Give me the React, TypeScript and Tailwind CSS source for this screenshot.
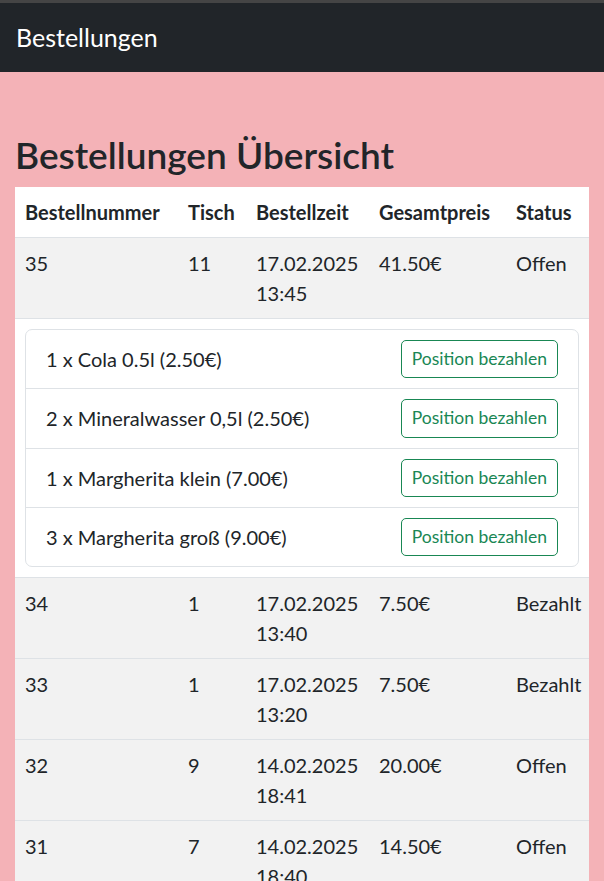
import React from "react";

const orders = [
  { id: "35", tisch: "11", date: "17.02.2025", time: "13:45", price: "41.50€", status: "Offen", expanded: true },
  { id: "34", tisch: "1", date: "17.02.2025", time: "13:40", price: "7.50€", status: "Bezahlt" },
  { id: "33", tisch: "1", date: "17.02.2025", time: "13:20", price: "7.50€", status: "Bezahlt" },
  { id: "32", tisch: "9", date: "14.02.2025", time: "18:41", price: "20.00€", status: "Offen" },
  { id: "31", tisch: "7", date: "14.02.2025", time: "18:40", price: "14.50€", status: "Offen" },
];

const positions = [
  "1 x Cola 0.5l (2.50€)",
  "2 x Mineralwasser 0,5l (2.50€)",
  "1 x Margherita klein (7.00€)",
  "3 x Margherita groß (9.00€)",
];

export default function App() {
  return (
    <div className="min-h-screen bg-[#f4b2b7] font-['Lato','Noto_Sans',sans-serif] text-[#212529]">
      <div className="h-[3px] bg-[#454545]" />
      <nav className="h-[69px] bg-[#212529] flex items-center px-[15px]">
        <span className="text-white text-[25px] leading-[37px] ml-[1px]">Bestellungen</span>
      </nav>
      <div className="px-[15px] pt-[61px]">
        <h1 className="text-[37px] leading-[44px] font-semibold mb-[10px]">Bestellungen Übersicht</h1>
        <table className="w-full table-fixed border-collapse text-[20px] leading-[30px]">
          <colgroup>
            <col className="w-[163px]" />
            <col className="w-[68px]" />
            <col className="w-[123px]" />
            <col className="w-[137px]" />
            <col className="w-[83px]" />
          </colgroup>
          <thead>
            <tr className="bg-white border-b border-[#dee2e6]">
              <th className="p-[10px] text-left font-bold">Bestellnummer</th>
              <th className="p-[10px] text-left font-bold">Tisch</th>
              <th className="p-[10px] text-left font-bold">Bestellzeit</th>
              <th className="p-[10px] text-left font-bold">Gesamtpreis</th>
              <th className="p-[10px] text-left font-bold">Status</th>
            </tr>
          </thead>
          <tbody>
            {orders.map((o) => (
              <React.Fragment key={o.id}>
                <tr className="bg-[#f2f2f2] border-b border-[#dee2e6] align-top">
                  <td className="p-[10px]">{o.id}</td>
                  <td className="p-[10px]">{o.tisch}</td>
                  <td className="p-[10px]">
                    <span className="block">{o.date}</span>
                    <span className="block">{o.time}</span>
                  </td>
                  <td className="p-[10px]">{o.price}</td>
                  <td className="p-[10px] whitespace-nowrap">{o.status}</td>
                </tr>
                {o.expanded && (
                  <tr className="bg-white border-b border-[#dee2e6]">
                    <td colSpan={5} className="p-[10px]">
                      <ul className="border border-[#dee2e6] rounded-[7px] flex flex-col">
                        {positions.map((p, i) => (
                          <li
                            key={p}
                            className={`flex items-center justify-between px-[20px] py-[10px] ${
                              i < positions.length - 1 ? "border-b border-[#dee2e6]" : ""
                            }`}
                          >
                            <span>{p}</span>
                            <button className="border border-[#198754] text-[#198754] rounded-[5px] px-[10px] py-[5px] text-[17.5px] leading-[26.25px] bg-transparent">
                              Position bezahlen
                            </button>
                          </li>
                        ))}
                      </ul>
                    </td>
                  </tr>
                )}
              </React.Fragment>
            ))}
          </tbody>
        </table>
      </div>
    </div>
  );
}
